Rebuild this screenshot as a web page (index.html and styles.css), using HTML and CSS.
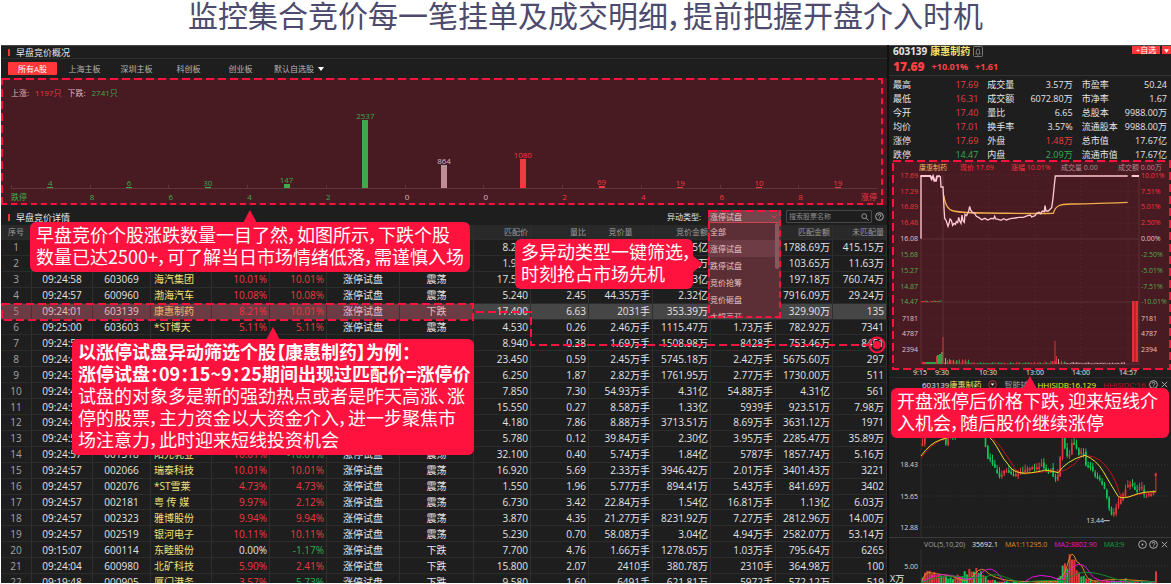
FILE: index.html
```html
<!DOCTYPE html>
<html lang="zh-CN">
  <head>
    <meta charset="UTF-8" />
    <meta name="viewport" content="width=device-width, initial-scale=1.0" />
    <title>早盘竞价</title>
    <link rel="stylesheet" href="styles.css">
  </head>
  <body>
    <h1 class="headline">监控集合竞价每一笔挂单及成交明细，提前把握开盘介入时机</h1>

    <main class="terminal">
      <div class="left">
        <section class="overview">
          <h2 class="panel-title">早盘竞价概况</h2>
          <nav class="tabs">
            <button class="tab active">所有A股</button>
            <button class="tab">上海主板</button>
            <button class="tab">深圳主板</button>
            <button class="tab">科创板</button>
            <button class="tab">创业板</button>
            <label class="tab-select">
              <select aria-label="自选股">
                <option>默认自选股</option>
              </select>
              <svg class="caret" viewBox="0 0 6 4"><path d="M0 0h6L3 4z" /></svg>
            </label>
          </nav>
          <div class="spread">
            <p class="spread-sum">
              <span>上涨:</span><span class="up">1197只</span>
              <span>下跌:</span><span class="down">2741只</span>
            </p>
            <div class="bars" id="bars"></div>
            <div class="bars-axis">
              <span class="down">跌停</span><span class="down">8</span><span class="down">6</span
              ><span class="down">4</span><span class="down">2</span><span>0</span><span>0</span
              ><span class="up">2</span><span class="up">4</span><span class="up">6</span
              ><span class="up">8</span><span class="up">涨停</span>
            </div>
            <svg class="dash-box"><rect x="1" y="1" width="100%" height="100%" /></svg>
          </div>
        </section>

        <section class="detail">
          <header class="detail-head">
            <h2 class="panel-title">早盘竞价详情</h2>
            <div class="filters">
              <label for="kind">异动类型:</label>
              <div class="kind">
                <select id="kind">
                  <option>涨停试盘</option>
                </select>
                <svg class="kind-caret" viewBox="0 0 6 4"><path d="M0.500 0.500L3 3l2.500-2.500" /></svg>
                <ul class="kind-list">
                  <li>全部</li>
                  <li class="picked">涨停试盘</li>
                  <li>跌停试盘</li>
                  <li>竞价抢筹</li>
                  <li>竞价砸盘</li>
                  <li>大幅高开</li>
                </ul>
                <svg class="kind-dash"><rect x="1" y="1" width="100%" height="100%" /></svg>
              </div>
              <div class="search">
                <input type="text" placeholder="搜索股票名称" aria-label="搜索股票名称" />
                <svg viewBox="0 0 10 10"><circle cx="4" cy="4" r="3" /><path d="M6.200 6.200L9.500 9.500" /></svg>
              </div>
              <svg class="ico" viewBox="0 0 10 10"><circle cx="5" cy="5" r="4.300" /><path d="M3.500 4a1.500 1.500 0 1 1 2.200 1.300q-.7.400-.7 1M5 7.300v.8" /></svg>
            </div>
          </header>

          <div class="table-wrap">
            <table class="quotes">
              <colgroup>
                <col class="c-no" /><col class="c-61" /><col class="c-58" /><col class="c-61" />
                <col class="c-58" /><col class="c-57" /><col class="c-73" /><col class="c-74" />
                <col class="c-57" /><col class="c-58" /><col class="c-64" /><col class="c-58" />
                <col class="c-65" /><col class="c-57" /><col class="c-54" />
              </colgroup>
              <thead>
                <tr>
                  <th class="mid">序号</th><th></th><th></th><th></th><th></th><th></th><th></th><th></th>
                  <th>匹配价</th><th>量比</th><th class="mid">竞价量</th><th>竞价金额</th><th></th>
                  <th>匹配金额</th><th>未匹配量</th>
                </tr>
              </thead>
              <tbody id="rows"></tbody>
            </table>
          </div>

          <svg class="marks">
            <rect class="mark-row" x="1" y="97" width="471" height="16" />
            <path class="mark-line" d="M475 105H530V138H868" />
            <circle class="mark-ring" cx="876" cy="138" r="7.500" />
            <circle class="mark-dot" cx="876" cy="138" r="4" />
          </svg>

          <p class="callout note-spread">早盘竞价个股涨跌数量一目了然，如图所示，下跌个股<br />数量已达2500+，可了解当日市场情绪低落，需谨慎入场</p>
          <p class="callout note-kind">多异动类型一键筛选，<br />时刻抢占市场先机</p>
          <p class="callout note-case">
            <b>以涨停试盘异动筛选个股【康惠制药】为例：</b><br />
            <b>涨停试盘：09：15~9：25期间出现过匹配价=涨停价</b><br />
            试盘的对象多是新的强劲热点或者是昨天高涨、涨<br />停的股票，主力资金以大资金介入，进一步聚焦市<br />场注意力，此时迎来短线投资机会
          </p>
        </section>
      </div>

      <aside class="right">
        <header class="stock">
          <div class="stock-name">
            <span>603139</span>
            <span class="yellow">康惠制药</span>
            <svg class="bell" viewBox="0 0 10 11"><rect x=".5" y=".5" width="9" height="10" rx="1" /><path d="M2.500 8h5M3.300 8V5a1.700 2 0 0 1 3.400 0v3M4.500 9.300h1" /></svg>
            <div class="watch">
              <button>+自选</button>
              <button aria-label="更多"><svg viewBox="0 0 6 4"><path d="M0 0h6L3 4z" /></svg></button>
            </div>
          </div>
          <div class="stock-price">
            <strong>17.69</strong><span>+10.01%</span><span>+1.61</span>
          </div>
        </header>

        <dl class="facts">
          <div><dt>最高</dt><dd class="up">17.69</dd></div>
          <div><dt>成交量</dt><dd>3.57万</dd></div>
          <div><dt>市盈率</dt><dd>50.24</dd></div>
          <div><dt>最低</dt><dd class="up">16.31</dd></div>
          <div><dt>成交额</dt><dd>6072.80万</dd></div>
          <div><dt>市净率</dt><dd>1.67</dd></div>
          <div><dt>今开</dt><dd class="up">17.40</dd></div>
          <div><dt>量比</dt><dd>6.65</dd></div>
          <div><dt>总股本</dt><dd>9988.00万</dd></div>
          <div><dt>均价</dt><dd class="up">17.01</dd></div>
          <div><dt>换手率</dt><dd>3.57%</dd></div>
          <div><dt>流通股本</dt><dd>9988.00万</dd></div>
          <div><dt>涨停</dt><dd class="up">17.69</dd></div>
          <div><dt>外盘</dt><dd class="up">1.48万</dd></div>
          <div><dt>总市值</dt><dd>17.67亿</dd></div>
          <div><dt>跌停</dt><dd class="down">14.47</dd></div>
          <div><dt>内盘</dt><dd class="down">2.09万</dd></div>
          <div><dt>流通市值</dt><dd>17.67亿</dd></div>
        </dl>

        <svg class="minute" viewBox="0 0 282 217">
          <rect class="minute-bg" x="3" y="1" width="278" height="208" />
          <g class="grid">
            <path d="M32 15V204M54 15V204M250 15V204M32 79H250M32 142H250M32 204H250" />
            <path class="dotted" d="M32 15H250M32 31H250M32 47H250M32 63H250M32 95H250M32 111H250M32 127H250M32 158H250M32 174H250M32 189H250M100 15V204M146 15V204M192 15V204M239 15V204" />
          </g>
          <g class="t7">
            <text class="gold" x="30" y="10">康惠制药</text>
            <text class="rose" x="71" y="10">现价 17.69</text>
            <text class="rose" x="122" y="10">涨幅 10.01%</text>
            <text class="dust" x="172" y="10">成交量 0.00</text>
            <text class="dust" x="229" y="10">成交额 0.00万</text>
          </g>
          <g class="t7" id="minute-labels"></g>
          <g id="minute-vol"></g>
          <rect class="r-fill" x="243" y="141" width="6" height="61" />
          <path class="r-gap" d="M246 141v61" />
          <g transform="translate(-4 -5) scale(.33333)">
            <path class="avg" d="M176 120C180 150 190 165 205 168S240 174 300 174S420 177 505 175Q510 158 520 153Q530 147 560 147T728 142" />
            <path class="price" d="M108 251V63" />
            <path class="price thick" d="M106 63H136L140 72 144 64 148 77 153 77 156 64 165 63M740 63H762" />
            <path class="price" d="M166 63L168 96H174L177 160 179 190 184 198 189 214 193 202 195 192 199 196 203 211 207 205 211 208 214 200 218 203 221 187 224 198 228 205 231 180 234 197 238 202 240 178 245 182 248 175 251 168 254 154 257 165 262 172 268 174 274 184 282 188 290 194 300 190 308 195 318 190 326 191 329 184 332 192 340 193 348 196 356 191 364 195 376 191 390 189 402 187 415 187 428 182 436 180 440 186 450 182 455 175 462 172 467 176 472 168 478 170 480 152 483 168 490 168 496 162 500 158 504 130 508 90 511 63H728" />
            <path class="tick-r" d="M108 440h14M136 439l8 2M156 440l4-2" />
            <path class="tick-g" d="M122 438l8 3M145 438l10 2M160 441l10-4" />
          </g>
          <rect class="minute-dash" x="4" y="1" width="277" height="208" />
          <g class="t7 axis">
            <text x="31" y="215">9:15</text><text x="53" y="215">9:30</text>
            <text x="99" y="215">10:30</text><text x="146" y="215">13:00</text>
            <text x="192" y="215">14:00</text><text x="239" y="215">14:57</text>
          </g>
        </svg>

        <section class="daily">
          <div class="daily-bar">
            <span>603139<span class="yellow">康惠制药</span></span>
            <svg class="ico" viewBox="0 0 10 10"><circle class="ring-red" cx="5" cy="5" r="4.300" /><path class="fill-white" d="M3 4h4L5 6.500z" /></svg>
            <span class="grey">智能辅助</span>
            <span class="lemon">HHJSJDB:16.129</span>
            <span class="crimson">HHJSJDC:16.0</span>
            <span class="icons">
              <svg class="ico" viewBox="0 0 10 10"><circle cx="5" cy="5" r="4.300" /><path d="M3.500 4a1.500 1.500 0 1 1 2.200 1.300q-.7.400-.7 1M5 7.300v.8" /></svg>
              <svg class="ico" viewBox="0 0 10 10"><path d="M2 2l6 6M8 2L2 8" /></svg>
            </span>
          </div>
          <svg class="kline" viewBox="0 0 282 147">
            <path class="kgrid dotted" d="M32 75H279M32 106H279M32 137H279" />
            <path class="kgrid" d="M32 0V147" />
            <g class="t7 klabel">
              <text x="29" y="77">18.43</text><text x="29" y="109">15.65</text><text x="29" y="140">12.88</text>
              <text x="215" y="133">13.44</text>
            </g>
            <g transform="translate(-4 40) scale(.33333)">
              <g id="candles"></g>
              <path class="k-low" d="M656 272h18" />
              <path class="ma-red" d="M108 84Q140 40 175 28T290 5Q325 20 350 55T392 120Q405 132 440 129T500 122Q520 130 545 118T590 78Q630 72 660 105T705 195Q720 206 745 197T812 188" />
              <path class="ma-yellow" d="M108 78Q135 40 165 30T270 2Q315 10 335 50T380 117Q400 134 440 128T480 120Q505 124 520 128Q530 112 550 98T600 76Q635 90 655 125T700 200Q715 208 745 196T812 185" />
            </g>
          </svg>
          <p class="callout note-open">开盘涨停后价格下跌，迎来短线介<br />入机会，随后股价继续涨停</p>
        </section>

        <section class="volume">
          <div class="volume-bar">
            <span class="grey">VOL(5,10,20)</span>
            <span>35692.1</span>
            <span class="orange">MA1:11295.0</span>
            <span class="magenta">MA2:8802.90</span>
            <span class="green">MA3:9</span>
            <span class="icons">
              <svg class="ico" viewBox="0 0 10 10"><circle cx="5" cy="5" r="4.300" /><circle class="fill-grey" cx="5" cy="5" r="1" /></svg>
              <svg class="ico" viewBox="0 0 10 10"><circle cx="5" cy="5" r="4.300" /><path d="M3.500 4a1.500 1.500 0 1 1 2.200 1.300q-.7.400-.7 1M5 7.300v.8" /></svg>
              <svg class="ico" viewBox="0 0 10 10"><path d="M2 2l6 6M8 2L2 8" /></svg>
            </span>
          </div>
          <svg class="vol" viewBox="0 0 282 36">
            <path class="kgrid dotted" d="M32 16H279" />
            <path class="kgrid" d="M32 0V36" />
            <g class="t7 klabel"><text x="29" y="19">5.00</text></g>
            <text class="t9" x="1" y="32">X万</text>
            <g transform="translate(-4 -120) scale(.33333)">
              <g id="volumes"></g>
              <path class="v-orange" d="M110 455Q120 425 135 428T175 434T225 448T270 432T310 430Q340 452 400 454T515 455Q540 440 550 395T575 395Q590 400 600 430T650 452T812 456" />
              <path class="v-magenta" d="M110 458Q140 435 170 434T230 445T290 428T350 445T420 455T530 452Q560 405 580 403T615 430T700 455H812" />
              <path class="v-green" d="M110 458Q170 432 230 440T310 438T370 445T430 456T540 452Q570 428 600 427T670 440T740 455H812" />
            </g>
          </svg>
        </section>
      </aside>
    </main>

    <script src="script.js"></script>
  </body>
</html>
```

FILE: styles.css
```css
* {
  box-sizing: border-box;
}

body {
  margin: 0;
  background: #ffffff;
  color: #e4e4e4;
  font-family: "Open Sans", "Noto Sans CJK SC", sans-serif;
  font-size: 10px;
  overflow: hidden;
}

h1,
h2,
p,
dl,
dd,
ul {
  margin: 0;
  padding: 0;
}

button,
input,
select {
  font: inherit;
  color: inherit;
  margin: 0;
  padding: 0;
  border: none;
  background: none;
  appearance: none;
}

.headline {
  height: 45px;
  color: #4c4b6e;
  font-family: "Noto Sans CJK SC", sans-serif;
  font-size: 30px;
  font-weight: 400;
  font-feature-settings: "palt";
  line-height: 28px;
  text-align: center;
  white-space: nowrap;
}

.terminal {
  display: grid;
  grid-template-columns: minmax(0, 1fr) 282px;
  height: calc(100vh - 46px);
  margin-left: 1px;
  overflow: hidden;
  background: #1e1e1e;
}

.up {
  color: #ee3a40;
}
.down {
  color: #2fae4e;
}
.yellow {
  color: #f2e36b;
}

/* left column */
.left {
  display: flex;
  flex-direction: column;
  min-height: 0;
  border-right: 2px solid #111111;
}

.panel-title {
  display: flex;
  align-items: center;
  gap: 6px;
  height: 14px;
  padding-left: 7px;
  color: #e8e8e8;
  font-size: 9px;
  font-weight: 400;
}
.panel-title::before {
  content: "";
  width: 2px;
  height: 7px;
  background: #f0383c;
}

.overview .panel-title {
  border-top: 1px solid #4a4a4a;
  border-bottom: 1px solid #2e2e2e;
}

.tabs {
  display: flex;
  align-items: center;
  gap: 3px;
  height: 19px;
  padding-left: 7px;
  color: #b4b4b4;
  font-size: 8px;
}
.tab {
  width: 49px;
  height: 13px;
  border-radius: 1px;
  line-height: 12px;
  text-align: center;
}
.tab.active {
  background: #ff373a;
  color: #ffffff;
}
.tab-select {
  display: flex;
  align-items: center;
  gap: 4px;
  margin-left: 6px;
}
.caret {
  width: 6px;
  fill: #ffffff;
}

.spread {
  position: relative;
  height: 129px;
  padding: 7px 10px 0;
  background: #481a22;
  color: #ddb6bd;
  font-size: 8px;
  border-bottom: 2px solid #1e1e1e;
}
.spread .down {
  color: #3fa94c;
}
.spread-sum {
  display: flex;
  gap: 6px;
  height: 16px;
  line-height: 16px;
}
.bars {
  display: flex;
  height: 88px;
  border-bottom: 1px solid #62343c;
}
.bar {
  display: flex;
  flex: 1;
  flex-direction: column;
  align-items: center;
  justify-content: flex-end;
  line-height: 8px;
  background: linear-gradient(#62343c, #62343c) left bottom / 1px 3px no-repeat;
}
.bar i {
  width: 6px;
  min-height: 1px;
  background: currentColor;
}
.bar.flat i {
  background: #bf8d95;
}
.bars-axis {
  display: flex;
  line-height: 16px;
}
.bars-axis span {
  flex: 1;
  white-space: nowrap;
}
.bars-axis span:last-child {
  display: flex;
  flex: none;
  justify-content: flex-end;
  width: 0;
}

.dash-box,
.kind-dash {
  position: absolute;
  overflow: hidden;
  fill: none;
  stroke: #ff123e;
  stroke-width: 2;
  stroke-dasharray: 8 4;
}
.dash-box {
  left: 0;
  top: 0;
  width: calc(100% - 4px);
  height: 127px;
  border-right: 2px dashed #ff123e;
  border-bottom: 2px dashed #ff123e;
}

.detail {
  position: relative;
  flex: 1;
  min-height: 0;
  overflow: hidden;
}
.detail-head {
  display: flex;
  justify-content: space-between;
  height: 18px;
  padding: 3px 3px 0 0;
  font-size: 8px;
}
.filters {
  display: flex;
  align-items: center;
  height: 13px;
}
.filters > label {
  margin-right: 7px;
}

.kind {
  position: relative;
  z-index: 2;
  width: 73px;
  height: 13px;
  margin-right: 5px;
  background: #74444c;
  color: #e6c3c8;
  line-height: 13px;
}
.kind select {
  display: block;
  width: 100%;
  height: 13px;
  padding-left: 2px;
  border-bottom: 1px solid #d0434f;
}
.kind-caret {
  position: absolute;
  right: 4px;
  top: 5px;
  width: 6px;
  fill: none;
  stroke: #ff3344;
}
.kind-list {
  position: absolute;
  left: 0;
  top: 13px;
  width: 100%;
  height: 95px;
  overflow: hidden;
  list-style: none;
  background: #5c2f37;
  line-height: 17px;
}
.kind-list::after {
  content: "";
  position: absolute;
  right: 2px;
  top: 0;
  width: 4px;
  height: 46px;
  border-radius: 2px;
  background: #88585f;
}
.kind-list li {
  padding-left: 2px;
}
.picked {
  background: #6d3c45;
}
.kind-dash {
  left: 0;
  top: 0;
  width: 100%;
  height: 108px;
  border-right: 2px dashed #ff123e;
  border-bottom: 2px dashed #ff123e;
}

.search {
  display: flex;
  align-items: center;
  width: 86px;
  height: 13px;
  margin-right: 3px;
  padding: 0 2px;
  border: 1px solid #484848;
  border-radius: 1px;
}
.search input {
  flex: 1;
  min-width: 0;
  font-size: 7px;
}
.search input::placeholder {
  color: #8a8a8a;
}
.search svg {
  width: 8px;
  fill: none;
  stroke: #b0b0b0;
}

.ico {
  width: 9px;
  height: 9px;
  flex: none;
  fill: none;
  stroke: #b8b8b8;
  stroke-width: 1;
}

/* quotes table */
.table-wrap {
  overflow: hidden;
}
.quotes {
  width: 100%;
  height: 365px;
  table-layout: fixed;
  border-collapse: separate;
  border-spacing: 0;
  line-height: 14px;
}
.c-no { width: 31px; }
.c-54 { width: 54px; }
.c-57 { width: 57px; }
.c-58 { width: 58px; }
.c-61 { width: 61px; }
.c-64 { width: 64px; }
.c-65 { width: 65px; }
.c-73 { width: 73px; }
.c-74 { width: 74px; }

.quotes th,
.quotes td {
  padding: 0 2px;
  border-right: 1px solid #2f2f2f;
  border-bottom: 1px solid #2c2c2c;
  text-align: right;
  white-space: nowrap;
  vertical-align: middle;
}
.quotes th {
  background: #292929;
  color: #9c9c9c;
  font-size: 8px;
  font-weight: 400;
}
.quotes .mid {
  text-align: center;
}
.quotes .num {
  color: #a4a4a4;
  text-align: center;
}
.quotes .name {
  padding-left: 3px;
  color: #eee07a;
  text-align: left;
}
.quotes .current td {
  background: #464646;
}

.marks {
  position: absolute;
  left: 0;
  top: 0;
  width: 100%;
  height: 100%;
  fill: none;
  stroke: #ff123e;
  stroke-width: 2;
}
.mark-row {
  fill: rgba(255, 18, 62, 0.2);
  stroke-dasharray: 8 4;
}
.mark-line {
  stroke-dasharray: 8 4;
}
.mark-dot {
  fill: #ff123e;
  stroke: none;
}

/* red notes over the screens */
.callout {
  position: absolute;
  z-index: 3;
  padding: 1px 6px 4px;
  border-radius: 6px;
  background: #ff123e;
  color: #ffffff;
  font-family: "Noto Sans CJK SC", sans-serif;
  font-size: 18px;
  font-feature-settings: "palt";
  line-height: 22px;
  white-space: nowrap;
}
.callout::before {
  content: "";
  position: absolute;
  left: 50%;
  top: -12px;
  width: 14px;
  height: 13px;
  margin-left: -7px;
  background: #ff123e;
  clip-path: polygon(50% 0, 100% 100%, 0 100%);
}
.note-spread {
  left: 29px;
  top: 15px;
  height: 50px;
}
.note-kind {
  left: 514px;
  top: 32px;
  width: 178px;
  height: 50px;
}
.note-kind::before {
  left: auto;
  right: -10px;
  top: 16px;
  width: 11px;
  height: 18px;
  clip-path: polygon(0 0, 100% 50%, 0 100%);
}
.note-case {
  left: 71px;
  top: 132px;
  width: 402px;
  height: 116px;
}
.note-open {
  left: 2px;
  top: 10px;
  width: 278px;
  height: 50px;
}

/* right column */
.right {
  display: flex;
  flex-direction: column;
  min-height: 0;
  overflow: hidden;
}
.right svg {
  display: block;
}

.stock {
  height: 31px;
  padding-left: 4px;
  border-top: 1px solid #4a4a4a;
  border-bottom: 1px solid #333333;
  font-weight: 700;
}
.stock-name {
  display: flex;
  gap: 3px;
  height: 12px;
  font-size: 10px;
  line-height: 11px;
}
.bell {
  width: 10px;
  height: 11px;
  fill: none;
  stroke: #777777;
}
.watch {
  display: flex;
  gap: 2px;
  height: 9px;
  margin-left: auto;
  font-size: 8px;
  font-weight: 400;
  line-height: 7px;
}
.watch button {
  display: flex;
  justify-content: center;
  width: 28px;
  height: 8px;
  background: #ff373a;
  color: #ffffff;
}
.watch button + button {
  width: 9px;
  padding-top: 2px;
}
.watch svg {
  width: 5px;
  fill: #ffffff;
}
.stock-price {
  display: flex;
  align-items: center;
  gap: 7px;
  height: 17px;
  color: #ff4045;
  font-size: 9px;
}
.stock-price strong {
  font-size: 12px;
}

.facts {
  display: grid;
  grid-template-columns: repeat(3, 1fr);
  column-gap: 9px;
  padding: 2px 4px 0;
  font-size: 9px;
  line-height: 14px;
}
.facts div {
  display: flex;
  justify-content: space-between;
  height: 14px;
  white-space: nowrap;
}

.minute {
  flex: none;
  width: 100%;
  margin-top: -2px;
}
.t7 {
  font-size: 7px;
}
.t9 {
  font-size: 9px;
  fill: #e4e4e4;
}
.minute-bg {
  fill: #481a22;
}
.minute-dash {
  fill: none;
  stroke: #ff123e;
  stroke-width: 2;
  stroke-dasharray: 8 4;
}
.grid path {
  fill: none;
  stroke: #5c2e36;
}
.grid .dotted {
  stroke: #5b2a33;
  stroke-dasharray: 1 3;
}
.gold { fill: #f4b568; }
.rose { fill: #f5333f; }
.dust { fill: #b48b92; }
.leaf { fill: #55aa50; }
.pink { fill: #e6c3c8; }
.left-label { text-anchor: end; }
.axis {
  fill: #e4e4e4;
  text-anchor: middle;
}
.r-fill { fill: #e62e36; }
.r-gap {
  stroke: #8c222b;
}
.price,
.avg {
  fill: none;
  stroke: #ffc8d0;
  stroke-width: 4;
}
.thick {
  stroke-width: 6;
}
.avg {
  stroke: #f2ac4e;
}
.tick-r {
  fill: none;
  stroke: #e8303c;
  stroke-width: 3;
}
.tick-g {
  fill: none;
  stroke: #3fa04c;
  stroke-width: 3;
}
.v-red { fill: #d8323a; }
.v-grn { fill: #2fa046; }
.v-pink { fill: #c99aa2; }

.daily {
  position: relative;
  flex: none;
  border-top: 1px solid #2c2c2c;
}
.daily-bar,
.volume-bar {
  display: flex;
  align-items: center;
  height: 12px;
  white-space: nowrap;
}
.daily-bar {
  gap: 7px;
  padding-left: 33px;
  font-size: 8px;
}
.daily-bar .grey {
  width: 26px;
  overflow: hidden;
}
.icons {
  display: flex;
  gap: 2px;
  margin-left: auto;
  padding-right: 2px;
}
.grey { color: #a0a0a0; }
.lemon { color: #f0ee18; }
.crimson {
  width: 48px;
  margin-right: -10px;
  overflow: hidden;
  color: #b8141c;
}
.orange { color: #e08a1c; }
.magenta { color: #e414dc; }
.green { color: #17a13c; }
.ring-red { stroke: #c8343a; }
.fill-white {
  fill: #ffffff;
  stroke: none;
}
.fill-grey {
  fill: #b8b8b8;
  stroke: none;
}

.kline,
.vol {
  width: 100%;
}
.kgrid {
  fill: none;
  stroke: #303030;
}
.kgrid.dotted {
  stroke: #3a3a3a;
  stroke-dasharray: 1 2;
}
.klabel {
  fill: #d8d8d8;
  text-anchor: end;
}
.k-red {
  fill: #e0383c;
}
.k-grn {
  fill: #12c458;
}
.k-low {
  stroke: #cccccc;
  stroke-width: 3;
}
.ma-red,
.ma-yellow,
.v-orange,
.v-magenta,
.v-green {
  fill: none;
  stroke-width: 3;
}
.ma-red { stroke: #c41218; }
.ma-yellow { stroke: #e8e02c; }
.v-orange { stroke: #e08a1c; }
.v-magenta { stroke: #e414dc; }
.v-green { stroke: #128a30; }

.volume {
  flex: none;
  border-top: 1px solid #3a3a3a;
}
.volume-bar {
  gap: 7px;
  padding-left: 35px;
  font-size: 7px;
}
```

FILE: script.js
```js
// [count, colour class] for each band of the up/down spread
const spread = [
  [4, "down"], [6, "down"], [30, "down"], [147, "down"], [2537, "down"], [864, "flat"],
  [1080, "up"], [69, "up"], [19, "up"], [10, "up"], [19, "up"],
];

document.getElementById("bars").innerHTML = spread
  .map(([n, c]) => {
    const h = Math.max(1, Math.round((n / 2537) * 68));
    return `<div class="bar ${c}"><span>${n}</span><i style="height:${h}px"></i></div>`;
  })
  .join("");

// 序号, 时间, 代码, 名称, 涨幅, 涨幅, 类型, 走势, 匹配价, 量比, 竞价量, 竞价金额, 匹配量, 匹配金额, 未匹配量
const rows = [
  "1||||||||8.230|||1.35亿||1788.69万|415.15万",
  "2||||||||1.920|||万||103.65万|11.63万",
  "3|09:24:58|603069|海汽集团|10.01%|10.01%|涨停试盘|震荡|17.580|||1.33亿||197.18万|760.74万",
  "4|09:24:57|600960|渤海汽车|10.08%|10.08%|涨停试盘|震荡|5.240|2.45|44.35万手|2.32亿||7916.09万|29.24万",
  "5|09:24:01|603139|康惠制药|8.21%|10.01%|涨停试盘|下跌|17.400|6.63|2031手|353.39万||329.90万|135",
  "6|09:25:00|603603|*ST博天|5.11%|5.11%|涨停试盘|震荡|4.530|0.26|2.46万手|1115.47万|1.73万手|782.92万|7341",
  "7|09:24:57|||||||8.940|0.38|1.69万手|1508.98万|8428手|753.46万|8451",
  "8|09:24:48|||||||23.450|0.59|2.45万手|5745.18万|2.42万手|5675.60万|297",
  "9|09:24:38|||||||6.250|1.87|2.82万手|1761.95万|2.77万手|1730.00万|511",
  "10|09:24:48|||||||7.850|7.30|54.93万手|4.31亿|54.88万手|4.31亿|561",
  "11|09:24:57|||||||15.550|0.27|8.58万手|1.33亿|5939手|923.51万|7.98万",
  "12|09:24:48|||||||4.180|7.86|8.88万手|3713.51万|8.69万手|3631.12万|1971",
  "13|09:24:57|||||||5.780|0.12|39.84万手|2.30亿|3.95万手|2285.47万|35.89万",
  "14|09:24:57|001318|阳光乳业|10.01%|-10.01%|涨停试盘|震荡|32.100|0.40|5.74万手|1.84亿|5787手|1857.74万|5.16万",
  "15|09:24:57|002066|瑞泰科技|10.01%|10.01%|涨停试盘|震荡|16.920|5.69|2.33万手|3946.42万|2.01万手|3401.43万|3221",
  "16|09:24:57|002076|*ST雪莱|4.73%|4.73%|涨停试盘|震荡|1.550|1.96|5.77万手|894.41万|5.43万手|841.69万|3402",
  "17|09:24:57|002181|粤 传 媒|9.97%|2.12%|涨停试盘|震荡|6.730|3.42|22.84万手|1.54亿|16.81万手|1.13亿|6.03万",
  "18|09:24:57|002323|雅博股份|9.94%|9.94%|涨停试盘|震荡|3.870|4.35|21.27万手|8231.92万|7.27万手|2812.96万|14.00万",
  "19|09:24:57|002519|银河电子|10.11%|10.11%|涨停试盘|震荡|5.230|0.70|58.08万手|3.04亿|4.94万手|2582.07万|53.14万",
  "20|09:15:07|600114|东睦股份|0.00%|-1.17%|涨停试盘|下跌|7.700|4.76|1.66万手|1278.05万|1.03万手|795.64万|6265",
  "21|09:24:04|600980|北矿科技|5.90%|2.41%|涨停试盘|下跌|15.800|2.07|2410手|380.78万|2310手|364.98万|100",
  "22|09:19:48|000905|厦门港务|3.57%|-5.73%|涨停试盘|下跌|9.580|1.60|6491手|621.81万|5972手|572.12万|519",
];

function cellClass(i, v) {
  if (i === 0) return "num";
  if (i === 3) return "name";
  if (i === 4 || i === 5) {
    if (v.startsWith("-")) return "down";
    return v === "0.00%" ? "" : "up";
  }
  return [1, 2, 6, 7].includes(i) ? "mid" : "";
}

document.getElementById("rows").innerHTML = rows
  .map((line) => {
    const cells = line.split("|");
    const tds = cells.map((v, i) => `<td class="${cellClass(i, v)}">${v}</td>`).join("");
    return `<tr${cells[0] === "5" ? ' class="current"' : ""}>${tds}</tr>`;
  })
  .join("");

// price and percent scales of the minute chart
const scale = [
  ["17.69", "10.01%", 18, "rose"], ["17.29", "7.51%", 34, "rose"], ["16.89", "5.01%", 49, "rose"],
  ["16.48", "2.50%", 65, "rose"], ["16.08", "0.00%", 81, "pink"], ["15.68", "-2.50%", 97, "leaf"],
  ["15.27", "-5.01%", 113, "leaf"], ["14.87", "-7.51%", 129, "leaf"], ["14.47", "-10.01%", 144, "leaf"],
  ["7181", "7181", 161, "pink"], ["4787", "4787", 176, "pink"], ["2394", "2394", 192, "pink"],
];
document.getElementById("minute-labels").innerHTML = scale
  .map(([l, r, y, c]) => `<text class="${c} left-label" x="29" y="${y}">${l}</text><text class="${c}" x="252" y="${y}">${r}</text>`)
  .join("");

let seed = 7;
function rand() {
  seed = (seed * 16807) % 2147483647;
  return seed / 2147483647;
}

function rect(x, y, w, h, c) {
  return `<rect class="${c}" x="${x}" y="${y.toFixed(1)}" width="${w}" height="${h.toFixed(1)}"/>`;
}

let vol = rect(33, 202, 5, 2, "v-red") + rect(37, 202, 12, 2, "v-grn");
[[48, 9], [50, 10], [52, 12]].forEach(([x, h]) => (vol += rect(x, 204 - h, 2, h, "v-grn")));
vol += rect(47, 196, 1, 8, "v-red") + rect(53.5, 177, 1, 27, "v-red");
for (let x = 55; x < 236; x += 1.5) {
  const h = x < 82 ? 1 + rand() * 4 : x > 140 && x < 176 ? 0.7 + rand() * 2.5 : 0.5 + rand() * 1.3;
  vol += rect(x, 204 - h, 1, h, x > 176 ? "v-pink" : rand() > 0.5 ? "v-red" : "v-grn");
}
vol += rect(165.5, 181, 1, 23, "v-red") + rect(167, 196, 1, 8, "v-red") + rect(169, 199, 1, 5, "v-pink");
vol += rect(56, 198, 1, 6, "v-pink") + rect(60, 199, 1, 5, "v-grn");
document.getElementById("minute-vol").innerHTML = vol;

function at(points, x) {
  const i = points.findIndex((p) => p[0] >= x);
  if (i < 1) return points[i === 0 ? 0 : points.length - 1][1];
  const [x0, y0] = points[i - 1];
  const [x1, y1] = points[i];
  return y0 + ((x - x0) / (x1 - x0)) * (y1 - y0);
}

const closes = [
  [108, 45], [122, 10], [150, 5], [168, 20], [180, 42], [192, 20], [240, 5], [290, 0], [297, 30],
  [302, 78], [315, 95], [328, 118], [340, 140], [352, 128], [365, 118], [380, 134], [410, 128],
  [425, 116], [455, 112], [467, 100], [478, 120], [485, 135], [495, 118], [507, 152], [518, 135],
  [525, 60], [530, 20], [540, 72], [550, 78], [556, 35], [568, 42], [580, 75], [592, 62], [600, 105],
  [615, 112], [630, 142], [645, 152], [660, 190], [672, 245], [680, 262], [690, 230], [702, 212],
  [712, 195], [722, 165], [735, 162], [750, 182], [766, 168], [776, 200], [790, 190], [806, 188],
];
let candles = "";
for (let x = 110; x < 806; x += 7) {
  const open = at(closes, x - 7) + (rand() - 0.5) * 8;
  const close = at(closes, x) + (rand() - 0.5) * 8;
  const top = Math.min(open, close);
  const h = Math.max(6, Math.abs(open - close));
  const c = close > open ? "k-grn" : "k-red";
  const wick = 3 + rand() * 14;
  candles += rect(x, top, 5, h, c) + rect(x + 1, top - wick, 3, h + wick + rand() * 9, c);
}
candles += rect(809, 130, 6, 8, "k-red") + rect(811, 128, 3, 60, "k-red");
document.getElementById("candles").innerHTML = candles;

const tops = [
  [108, 448], [120, 412], [150, 420], [168, 438], [205, 440], [240, 418], [256, 408], [272, 412],
  [295, 426], [310, 446], [340, 452], [430, 454], [505, 452], [522, 436], [533, 375], [543, 400],
  [553, 350], [566, 385], [582, 425], [600, 436], [620, 450], [700, 452], [716, 442], [730, 453], [806, 455],
];
let bars = "";
for (let x = 110; x < 806; x += 7) {
  const y = at(tops, x) + rand() * 16 * ((470 - at(tops, x)) / 50);
  bars += rect(x, y, 6, 470 - y, rand() > 0.5 ? "k-red" : "k-grn");
}
bars += rect(810, 424, 6, 46, "k-red");
document.getElementById("volumes").innerHTML = bars;
```
